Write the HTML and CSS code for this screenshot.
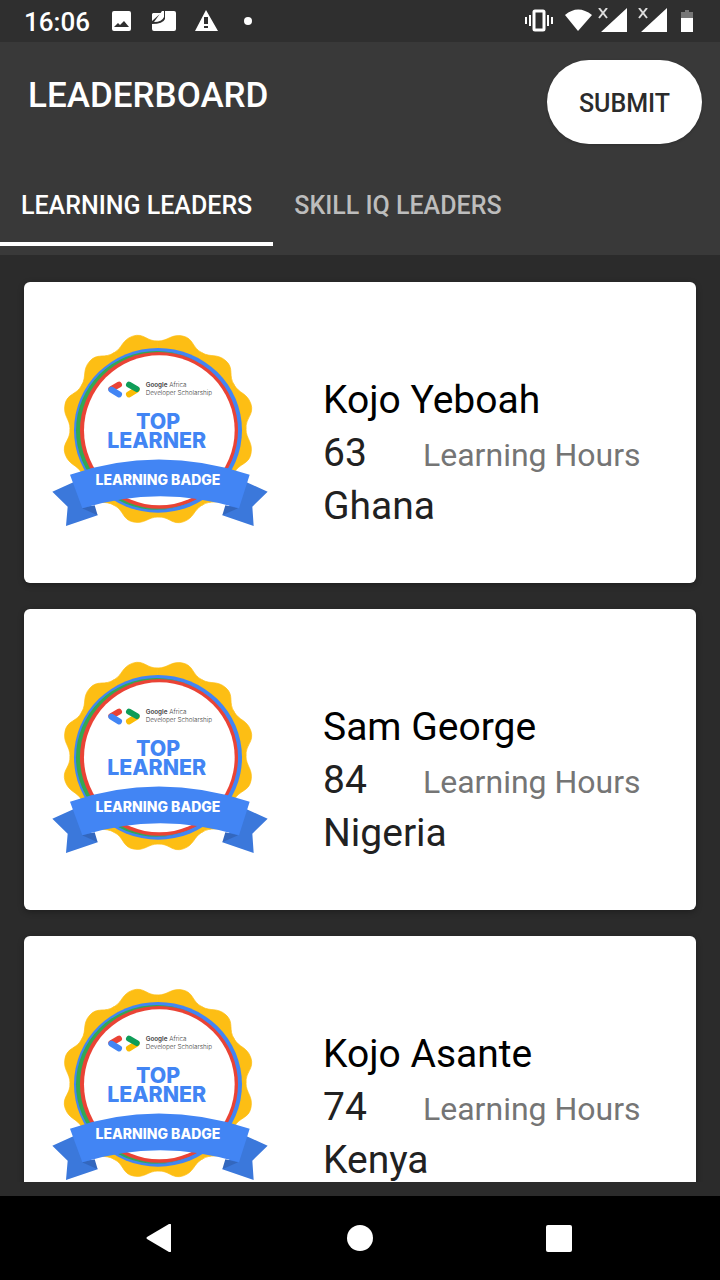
FILE: index.html
```html
<!DOCTYPE html>
<html lang="en">
<head>
<meta charset="utf-8">
<meta name="viewport" content="width=device-width, initial-scale=1">
<title>Leaderboard</title>
<link rel="stylesheet" href="styles.css">
</head>
<body>
<svg class="defs" aria-hidden="true">
  <defs>
    <path id="lobe" d="M0 0V-264C30 -264 40 -286 74 -279S102 -243 132 -229Z"/>
    <symbol id="badge" viewBox="0 0 720 645">
      <g class="seal" transform="translate(354 312)">
        <use href="#lobe"/><use href="#lobe" transform="rotate(30)"/><use href="#lobe" transform="rotate(60)"/>
        <use href="#lobe" transform="rotate(90)"/><use href="#lobe" transform="rotate(120)"/><use href="#lobe" transform="rotate(150)"/>
        <use href="#lobe" transform="rotate(180)"/><use href="#lobe" transform="rotate(210)"/><use href="#lobe" transform="rotate(240)"/>
        <use href="#lobe" transform="rotate(270)"/><use href="#lobe" transform="rotate(300)"/><use href="#lobe" transform="rotate(330)"/>
      </g>
      <ellipse cx="354" cy="316" rx="252" ry="247" fill="#4285f4"/>
      <ellipse cx="350" cy="316" rx="242" ry="238" fill="#34a853"/>
      <ellipse cx="359" cy="317" rx="239" ry="236" fill="#4285f4"/>
      <ellipse cx="351" cy="316" rx="240" ry="236" fill="#34a853"/>
      <ellipse cx="357" cy="316" rx="237" ry="235" fill="#ea4335"/>
      <ellipse cx="358" cy="316" rx="226" ry="225" fill="#fff"/>
      <g fill="none" stroke-width="18" stroke-linecap="round">
        <path d="M237 179L214 192" stroke="#ea4335"/>
        <path d="M214 194L237 208" stroke="#4285f4"/>
        <path d="M267 208L290 194" stroke="#fbbc04"/>
        <path d="M267 179L290 192" stroke="#0f9d58"/>
      </g>
      <text class="badge-small" x="317" y="187"><tspan class="strong">Google</tspan> Africa</text>
      <text class="badge-small" x="317" y="211">Developer Scholarship</text>
      <text class="badge-title" x="354" y="313">TOP</text>
      <text class="badge-title" x="350" y="369">LEARNER</text>
      <path fill="#3b78db" d="M37 500L100 472L173 571L78 603L83 545ZM683 500L620 472L547 571L641 603L637 545Z"/>
      <path fill="#3367be" d="M126 550L164 541L173 571ZM594 550L556 541L547 571Z"/>
      <path fill="#4285f4" d="M90 449Q354 358 629 449L597 550Q360 477 127 550Z"/>
      <text class="badge-ribbon" x="354" y="480">LEARNING BADGE</text>
    </symbol>
  </defs>
</svg>

<div class="status">
  <span class="clock">16:06</span>
  <svg class="notices" viewBox="0 0 145 24" aria-hidden="true">
    <path fill="#fff" fill-rule="evenodd" d="M3 2H18Q20 2 20 4V20Q20 22 18 22H3Q1 22 1 20V4Q1 2 3 2ZM3 18H18L13 12L9 16L7 14Z"/>
    <path fill="#fff" d="M54 2H63Q65 2 65 4V20Q65 22 63 22H43Q41 22 41 20V15Q52 15 54 10Z"/>
    <path fill="#fff" d="M42 4H50L41 12V5ZM51 2H53V8Q51 13 43 13Z"/>
    <path fill="#fff" fill-rule="evenodd" d="M95 1L107 22H84ZM93 8V15H97V8ZM93 17V19H97V17Z"/>
    <circle cx="137" cy="12" r="4" fill="#fff"/>
  </svg>
  <svg class="signals" viewBox="0 0 170 26" aria-hidden="true">
    <g fill="none" stroke="#fff" stroke-width="2">
      <rect x="10" y="3" width="10" height="19" rx="1" stroke-width="3"/>
      <path d="M2 9V16M6 7V18M24 7V18M28 9V16"/>
      <path stroke="#ddd" d="M75 0L83 10M83 0L75 10M115 0L123 10M123 0L115 10"/>
    </g>
    <path fill="#fff" d="M41 7Q54 -4 68 7L54 23ZM77 24H103V0ZM117 24H143V0Z"/>
    <path fill="#777" d="M157 4H161V2H165V4H169V11H157Z"/>
    <path fill="#fff" d="M157 10H169V24H157Z"/>
  </svg>
</div>

<header class="appbar">
  <div class="toolbar">
    <h1>LEADERBOARD</h1>
    <button class="submit" type="button">SUBMIT</button>
  </div>
  <nav class="tabs">
    <a class="tab active" href="#learning" aria-current="page">LEARNING LEADERS</a>
    <a class="tab" href="#skill">SKILL IQ LEADERS</a>
  </nav>
</header>

<main class="list" id="learning">
  <article class="card">
    <svg class="badge" role="img" aria-label="Top learner badge"><use href="#badge"/></svg>
    <div class="info">
      <h2>Kojo Yeboah</h2>
      <p class="score"><span class="hours">63</span><span class="unit">Learning Hours</span></p>
      <p>Ghana</p>
    </div>
  </article>
  <article class="card">
    <svg class="badge" role="img" aria-label="Top learner badge"><use href="#badge"/></svg>
    <div class="info">
      <h2>Sam George</h2>
      <p class="score"><span class="hours">84</span><span class="unit">Learning Hours</span></p>
      <p>Nigeria</p>
    </div>
  </article>
  <article class="card">
    <svg class="badge" role="img" aria-label="Top learner badge"><use href="#badge"/></svg>
    <div class="info">
      <h2>Kojo Asante</h2>
      <p class="score"><span class="hours">74</span><span class="unit">Learning Hours</span></p>
      <p>Kenya</p>
    </div>
  </article>
</main>

<footer class="navbar">
  <button type="button" aria-label="Back"><svg viewBox="0 0 28 28"><path fill="#fff" d="M1 13L23 0Q25 -1 25 1V27Q25 29 23 28L1 15Q0 14 1 13Z"/></svg></button>
  <button type="button" aria-label="Home"><svg viewBox="0 0 28 28"><circle cx="14" cy="14" r="13" fill="#fff"/></svg></button>
  <button type="button" aria-label="Recent apps"><svg viewBox="0 0 28 28"><rect x="0" y="1" width="26" height="27" rx="2" fill="#fff"/></svg></button>
</footer>
</body>
</html>
```
FILE: styles.css
```css
* {
  box-sizing: border-box;
}

body {
  margin: 0;
  height: 100vh;
  display: flex;
  flex-direction: column;
  background: #2b2b2b;
  color: #fff;
  font-family: Roboto, "Liberation Sans", sans-serif;
}

h1, h2, p {
  margin: 0;
  font-weight: 400;
}

button {
  border: 0;
  padding: 0;
  font: inherit;
  cursor: pointer;
}

.defs {
  position: absolute;
  width: 0;
  height: 0;
}

.status {
  display: flex;
  flex: none;
  align-items: center;
  height: 42px;
  padding: 0 26px 0 24px;
  background: #2f2f2f;
}

.clock {
  padding-top: 2px;
  font-size: 26px;
  font-weight: 500;
  line-height: 32px;
}

.notices {
  width: 145px;
  height: 24px;
  margin-left: 21px;
}

.signals {
  width: 170px;
  height: 26px;
  margin-left: auto;
}

.appbar {
  flex: none;
  padding-bottom: 9px;
  background: #393939;
}

.toolbar {
  display: flex;
  align-items: flex-start;
  justify-content: space-between;
  padding: 18px 18px 0 28px;
}

h1 {
  padding-top: 15px;
  font-size: 35px;
  line-height: 42px;
  font-weight: 500;
}

.submit {
  padding: 4px 32px 0;
  border-radius: 42px;
  background: #fff;
  color: #2b2b2b;
  font-size: 25px;
  font-weight: 500;
  line-height: 80px;
  box-shadow: 0 1px 3px rgba(0, 0, 0, 0.2);
}

.tabs {
  display: flex;
  padding-top: 20px;
}

.tab {
  padding: 6px 21px 0;
  border-bottom: 4px solid transparent;
  color: #bdbdbd;
  font-size: 25px;
  font-weight: 500;
  line-height: 72px;
  text-decoration: none;
}

.tab.active {
  border-color: #fff;
  color: #fff;
}

.list {
  display: flex;
  flex: 1;
  flex-direction: column;
  gap: 26px;
  min-height: 0;
  margin-bottom: 14px;
  padding: 27px 24px 0;
  overflow: hidden;
}

.card {
  display: flex;
  flex: none;
  gap: 43px;
  padding: 43px 16px;
  border-radius: 6px;
  background: #fff;
  box-shadow: 0 2px 6px rgba(0, 0, 0, 0.3);
}

.badge {
  flex: none;
  width: 240px;
  height: 215px;
}

.seal {
  fill: #fdbe14;
  stroke: #fdbe14;
  stroke-width: 2px;
}

.badge-small {
  fill: #444;
  font: 300 19px Inter, sans-serif;
}

.strong {
  font-weight: 600;
}

.badge-title {
  fill: #4285f4;
  font: 800 64px Inter, sans-serif;
  text-anchor: middle;
}

.badge-ribbon {
  fill: #fff;
  font: 800 42px Inter, sans-serif;
  text-anchor: middle;
}

.info {
  padding-top: 49px;
  color: #212121;
  font-size: 39px;
  line-height: 53px;
}

.info h2 {
  color: #000;
  font-size: 39px;
}

.score {
  display: flex;
  align-items: baseline;
  height: 53px;
}

.hours {
  width: 100px;
}

.unit {
  color: #757575;
  font-size: 32px;
}

.navbar {
  display: flex;
  flex: none;
  align-items: center;
  justify-content: center;
  gap: 116px;
  height: 84px;
  background: #000;
}

.navbar button {
  width: 84px;
  height: 84px;
  background: none;
}

.navbar svg {
  display: block;
  width: 28px;
  height: 28px;
  margin: auto;
}
```
